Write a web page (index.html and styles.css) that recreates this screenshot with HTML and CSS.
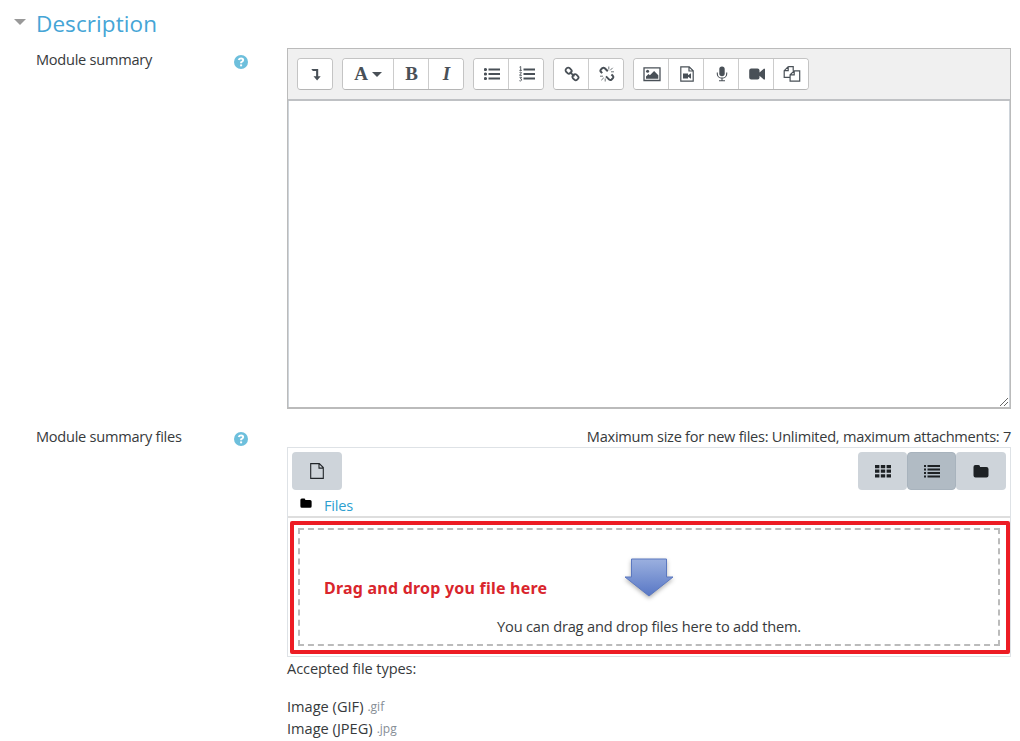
FILE: index.html
```html
<!DOCTYPE html>
<html lang="en">
<head>
<meta charset="utf-8">
<title>Description</title>
<link rel="stylesheet" href="styles.css">
</head>
<body>
<main class="page">
  <header class="section-head">
    <svg class="caret" viewBox="0 0 12 6"><path d="M0 0h12L6 6z"/></svg>
    <h1 class="section-title">Description</h1>
  </header>

  <section class="row row-editor">
    <div class="label"><span class="tight">Module summary</span></div>
    <div class="help"><svg viewBox="0 0 14 14"><circle cx="7" cy="7" r="7" fill="#6dbfdc"/><path d="M4.7 5.1Q5.2 3.400 7.1 3.400Q9.2 3.500 9.2 5.2Q9.1 6.400 7.1 7.400V8.3" fill="none" stroke="#fff" stroke-width="1.9"/><path d="M6.1 9.4h2v1.9h-2z" fill="#fff"/></svg></div>
    <div class="editor">
      <div class="toolbar">
        <div class="group">
          <button class="tool"><svg viewBox="0 0 16 16"><path d="M3.3 3h6.900v7.2h2.500L9.1 14.400 5.500 10.2h2.600V4.900H4.800z"/></svg></button>
        </div>
        <div class="group">
          <button class="tool wide"><span class="glyph">A</span><svg class="down" viewBox="0 0 10 5"><path d="M0 0h10L5 5z"/></svg></button>
          <button class="tool"><span class="glyph">B</span></button>
          <button class="tool"><span class="glyph italic">I</span></button>
        </div>
        <div class="group">
          <button class="tool"><svg viewBox="0 0 16 16"><circle cx="1.5" cy="3.5" r="1.6"/><circle cx="1.5" cy="8" r="1.6"/><circle cx="1.5" cy="12.5" r="1.6"/><path d="M4.5 2.5H16v2H4.5zM4.5 7H16v2H4.5zM4.5 11.5H16v2H4.5z"/></svg></button>
          <button class="tool"><svg viewBox="0 0 16 16"><path d="M4.5 2.5H16v2H4.5zM4.5 7H16v2H4.5zM4.5 11.5H16v2H4.5z"/><path d="M.5 1.2L1.7.5v3.9M.4 4.4h2.5M.5 6.4Q2.4 5.4 2.4 6.8L.6 9.3h2.3M.5 11.3h2.1L1.5 12.8Q2.9 12.8 2.6 14.2Q1.8 15.4.4 14.7" fill="none" stroke="#495057" stroke-width=".9"/></svg></button>
        </div>
        <div class="group">
          <button class="tool"><svg viewBox="0 0 16 16"><g fill="none" stroke="#495057" stroke-width="1.8"><rect x="1.6" y="2.2" width="6" height="5" rx="2" transform="rotate(45 4.6 4.7)"/><rect x="8.4" y="8.7" width="6" height="5" rx="2" transform="rotate(45 11.4 11.2)"/><path d="M5.8 5.8l4.6 4.5"/></g></svg></button>
          <button class="tool"><svg viewBox="0 0 16 16"><g fill="none" stroke="#495057" stroke-width="2"><path d="M3.2 7.1L1.9 5.8Q.9 4.6 2 3.4L3.4 2.1Q4.6 1.2 5.8 2.2L8.8 5.3"/><path d="M7 10.4l3.2 3.2Q11.4 14.6 12.6 13.5L13.9 12.1Q14.8 11 13.8 9.8L12.4 8.5"/></g><path d="M9.8.5v3M11.2 4.3l2.5-2.5M12 5.8h3M1 10.2h3M4.8 11.8l-2.5 2.4M6.2 12.5v3" fill="none" stroke="#495057" stroke-width=".8"/></svg></button>
        </div>
        <div class="group">
          <button class="tool"><svg class="big" viewBox="0 0 18 16"><path d="M1 1.8h16v12.7H1z" fill="none" stroke="#495057" stroke-width="1.3"/><circle cx="4.6" cy="5.3" r="1.5"/><path d="M3 12.7v-2.3l2.5-2.5 1.4 1.4 4.2-4.2 4.2 4.2v3.4z"/></svg></button>
          <button class="tool"><svg viewBox="0 0 16 16"><path d="M1.8.8h8.4l4 4v10.4H1.8zM10 .8V5h4.2" fill="none" stroke="#495057" stroke-width="1.2"/><path d="M4 7.5h5v5H4zM9 9.3l3-2v5.4l-3-2z"/></svg></button>
          <button class="tool"><svg viewBox="0 0 16 16"><rect x="5.3" y=".4" width="5.4" height="9.8" rx="2.7"/><path d="M3.3 6.5v1.4a4.7 4.2 0 0 0 9.4 0V6.5M8 12.2v2.5M5 14.8h6" fill="none" stroke="#495057" stroke-width="1.1"/></svg></button>
          <button class="tool"><svg class="big" viewBox="0 0 18 16"><path d="M3.2 2.6h6.3q2 0 2 2v2l4.3-3.8h1.2v10.8h-1.2l-4.3-3.8v1.8q0 2-2 2H3.2q-2 0-2-2v-7q0-2 2-2z"/></svg></button>
          <button class="tool"><svg class="big" viewBox="0 0 18 16"><path d="M5.2.7h5v4.1M5.2.7L1.2 4.7v6.6h5.9M5.2.7v4H1.2M11.2 4.8h5.5v10.4H7.1V8.8zM11.2 4.8v4H7.1" fill="none" stroke="#495057" stroke-width="1.2"/></svg></button>
        </div>
      </div>
      <div class="textarea"><svg class="grip" viewBox="0 0 10 10"><path d="M1 9l8-8M5 9l4-4" stroke="#555" fill="none" stroke-width=".9"/></svg></div>
    </div>
  </section>

  <section class="row">
    <div class="label"><span class="tight">Module summary files</span></div>
    <div class="help"><svg viewBox="0 0 14 14"><circle cx="7" cy="7" r="7" fill="#6dbfdc"/><path d="M4.7 5.1Q5.2 3.400 7.1 3.400Q9.2 3.500 9.2 5.2Q9.1 6.400 7.1 7.400V8.3" fill="none" stroke="#fff" stroke-width="1.9"/><path d="M6.1 9.4h2v1.9h-2z" fill="#fff"/></svg></div>
    <div class="files">
      <p class="limits"><span class="tight">Maximum size for new files: Unlimited, maximum attachments: 7</span></p>
      <div class="manager">
        <div class="manager-bar">
          <button class="btn"><svg viewBox="0 0 16 16"><path d="M1.7.6h8.6l4 4v10.8H1.7zM10 .6v4.5h4.3" fill="none" stroke="#212529" stroke-width="1.1"/></svg></button>
          <div class="views">
            <button class="btn"><svg viewBox="0 0 16 16"><path d="M0 2h4.4v3.2H0zM5.8 2h4.4v3.2H5.8zM11.6 2H16v3.2h-4.4zM0 6.6h4.4v3.2H0zM5.8 6.6h4.4v3.2H5.8zM11.6 6.6H16v3.2h-4.4zM0 11.2h4.4v3.2H0zM5.8 11.2h4.4v3.2H5.8zM11.6 11.2H16v3.2h-4.4z"/></svg></button>
            <button class="btn active"><svg viewBox="0 0 16 16"><path d="M0 2h2v2H0zM3.5 2H16v2H3.5zM0 5.5h2v2H0zM3.5 5.5H16v2H3.5zM0 9h2v2H0zM3.5 9H16v2H3.5zM0 12.5h2v2H0zM3.5 12.5H16v2H3.5z"/></svg></button>
            <button class="btn"><svg viewBox="0 0 16 16"><path d="M2.4 2h3q1.700 0 1.700 1.900h6.300q2.100 0 2.100 2v6.500q0 2-2 2H2.500q-2 0-2-2V4q0-2 1.900-2z"/></svg></button>
          </div>
        </div>
        <div class="path"><svg viewBox="0 0 16 16"><path d="M2.4 2h3q1.700 0 1.700 1.900h6.300q2.100 0 2.100 2v6.500q0 2-2 2H2.500q-2 0-2-2V4q0-2 1.900-2z"/></svg><a>Files</a></div>
        <div class="drop">
          <div class="drop-inner">
            <svg class="arrow" viewBox="0 0 50 40"><defs><linearGradient id="blue" x1="0" y1="0" x2="0" y2="1"><stop offset="0" stop-color="#9bb0df"/><stop offset="1" stop-color="#5877c5"/></linearGradient></defs><path d="M7.500 1h35v18h6.500L25 38 1 19h6.500z" fill="url(#blue)" stroke="#5b78c0" stroke-width="1"/></svg>
            <p class="drop-text">You can drag and drop files here to add them.</p>
            <strong class="note">Drag and drop you file here</strong>
          </div>
        </div>
      </div>
      <p class="accepted">Accepted file types:</p>
      <ul class="types">
        <li><span>Image (GIF)</span><small>.gif</small></li>
        <li><span>Image (JPEG)</span><small>.jpg</small></li>
      </ul>
    </div>
  </section>
</main>
</body>
</html>
```
FILE: styles.css
```css
* { box-sizing: border-box; }
body { margin: 0; background: #fff; color: #373a3c; font: 14.6px/22px "Open Sans", "Noto Sans", sans-serif; overflow: hidden; }
p, h1, ul { margin: 0; padding: 0; }
span, a, small { white-space: nowrap; }
svg { display: block; flex: none; }
button { margin: 0; padding: 0; font: inherit; color: inherit; display: flex; align-items: center; justify-content: center; }

.page { height: 741px; overflow: hidden; }
.section-head { display: flex; height: 48px; padding-left: 14px; }
.caret { width: 12px; height: 6px; margin: 19px 10px 0 0; fill: #999; }
.section-title { margin-top: 8px; font-size: 22.5px; line-height: 32px; font-weight: 400; letter-spacing: .08px; color: #45a5d6; }

.row { display: grid; grid-template-columns: 197px 54px 724px; padding-left: 36px; }
.row-editor { height: 377px; }
.tight { letter-spacing: -.27px; }
.help { padding: 7px 0 0 .5px; }
.help svg { width: 14px; height: 14px; }

.editor { height: 361px; display: flex; flex-direction: column; border: 1px solid #bbb; border-bottom-width: 2px; }
.toolbar { display: flex; gap: 9px; height: 52px; padding: 9px; background: #f0f0f0; border-bottom: 2px solid #bfc1c4; }
.group { display: flex; height: 32px; border: 1px solid #c4c4c4; border-bottom-color: #b5b5b5; border-radius: 4px; background: #fff; overflow: hidden; }
.tool { width: 35px; padding-left: 1px; border: 0; border-right: 1px solid #ccc; background: #fff; color: #495057; }
.tool:last-child { width: 34px; border-right: 0; }
.tool.wide { width: 51px; gap: 4px; padding: 0; }
.tool svg { width: 16px; height: 16px; fill: #495057; }
.tool svg.big { width: 18px; }
.tool svg.down { width: 10px; height: 5px; }
.glyph { font: bold 19px/30px "Liberation Serif", serif; }
.italic { font-style: italic; }
.textarea { flex: 1; display: flex; align-items: flex-end; justify-content: flex-end; border: 0 solid #ced4da; border-width: 0 1px; }
.grip { width: 10px; height: 10px; margin: 0 0 0 0; }

.limits { height: 22px; text-align: right; }
.manager { height: 210px; border: 1px solid #dee2e6; }
.manager-bar { display: flex; justify-content: space-between; padding: 4px 4px 0; }
.views { display: flex; }
.btn { width: 50px; height: 38px; border: 0; border-radius: 4px; background: #ced4da; }
.btn svg { width: 16px; height: 16px; fill: #1d2124; }
.views .btn { width: 49px; }
.views .btn:last-child { width: 50px; }
.views .active { background: #b1bbc4; border: 1px solid #a8b3bd; }
.path { display: flex; height: 28px; padding: 4px 0 0 12px; border-bottom: 2px solid #dedede; letter-spacing: -.2px; color: #2d9fd0; }
.path svg { width: 12px; height: 12px; margin: 3px 12px 0 0; fill: #000; }
.drop { width: 720px; height: 133px; margin: 3px 0 0 2px; padding: 3px 6px 4px 4px; border: 4px solid #ed1c24; border-radius: 2px; }
.drop-inner { position: relative; height: 118px; padding-top: 28px; border: 2px dashed #bbb; display: flex; flex-direction: column; align-items: center; }
.arrow { width: 50px; height: 40px; filter: drop-shadow(0 2px 2px rgba(0, 0, 0, .3)); overflow: visible; }
.drop-text { margin-top: 17px; letter-spacing: -.18px; }
.note { position: absolute; left: 24px; top: 47px; font: bold 16px/22px "Noto Sans", "DejaVu Sans", sans-serif; letter-spacing: .22px; color: #d9252c; white-space: nowrap; }
.accepted { letter-spacing: -.1px; }
.types { margin-top: 16px; list-style: none; }
.types li { display: flex; gap: 4px; height: 22px; }
.types small { font-size: 12px; line-height: 24px; color: #868e96; }
```
